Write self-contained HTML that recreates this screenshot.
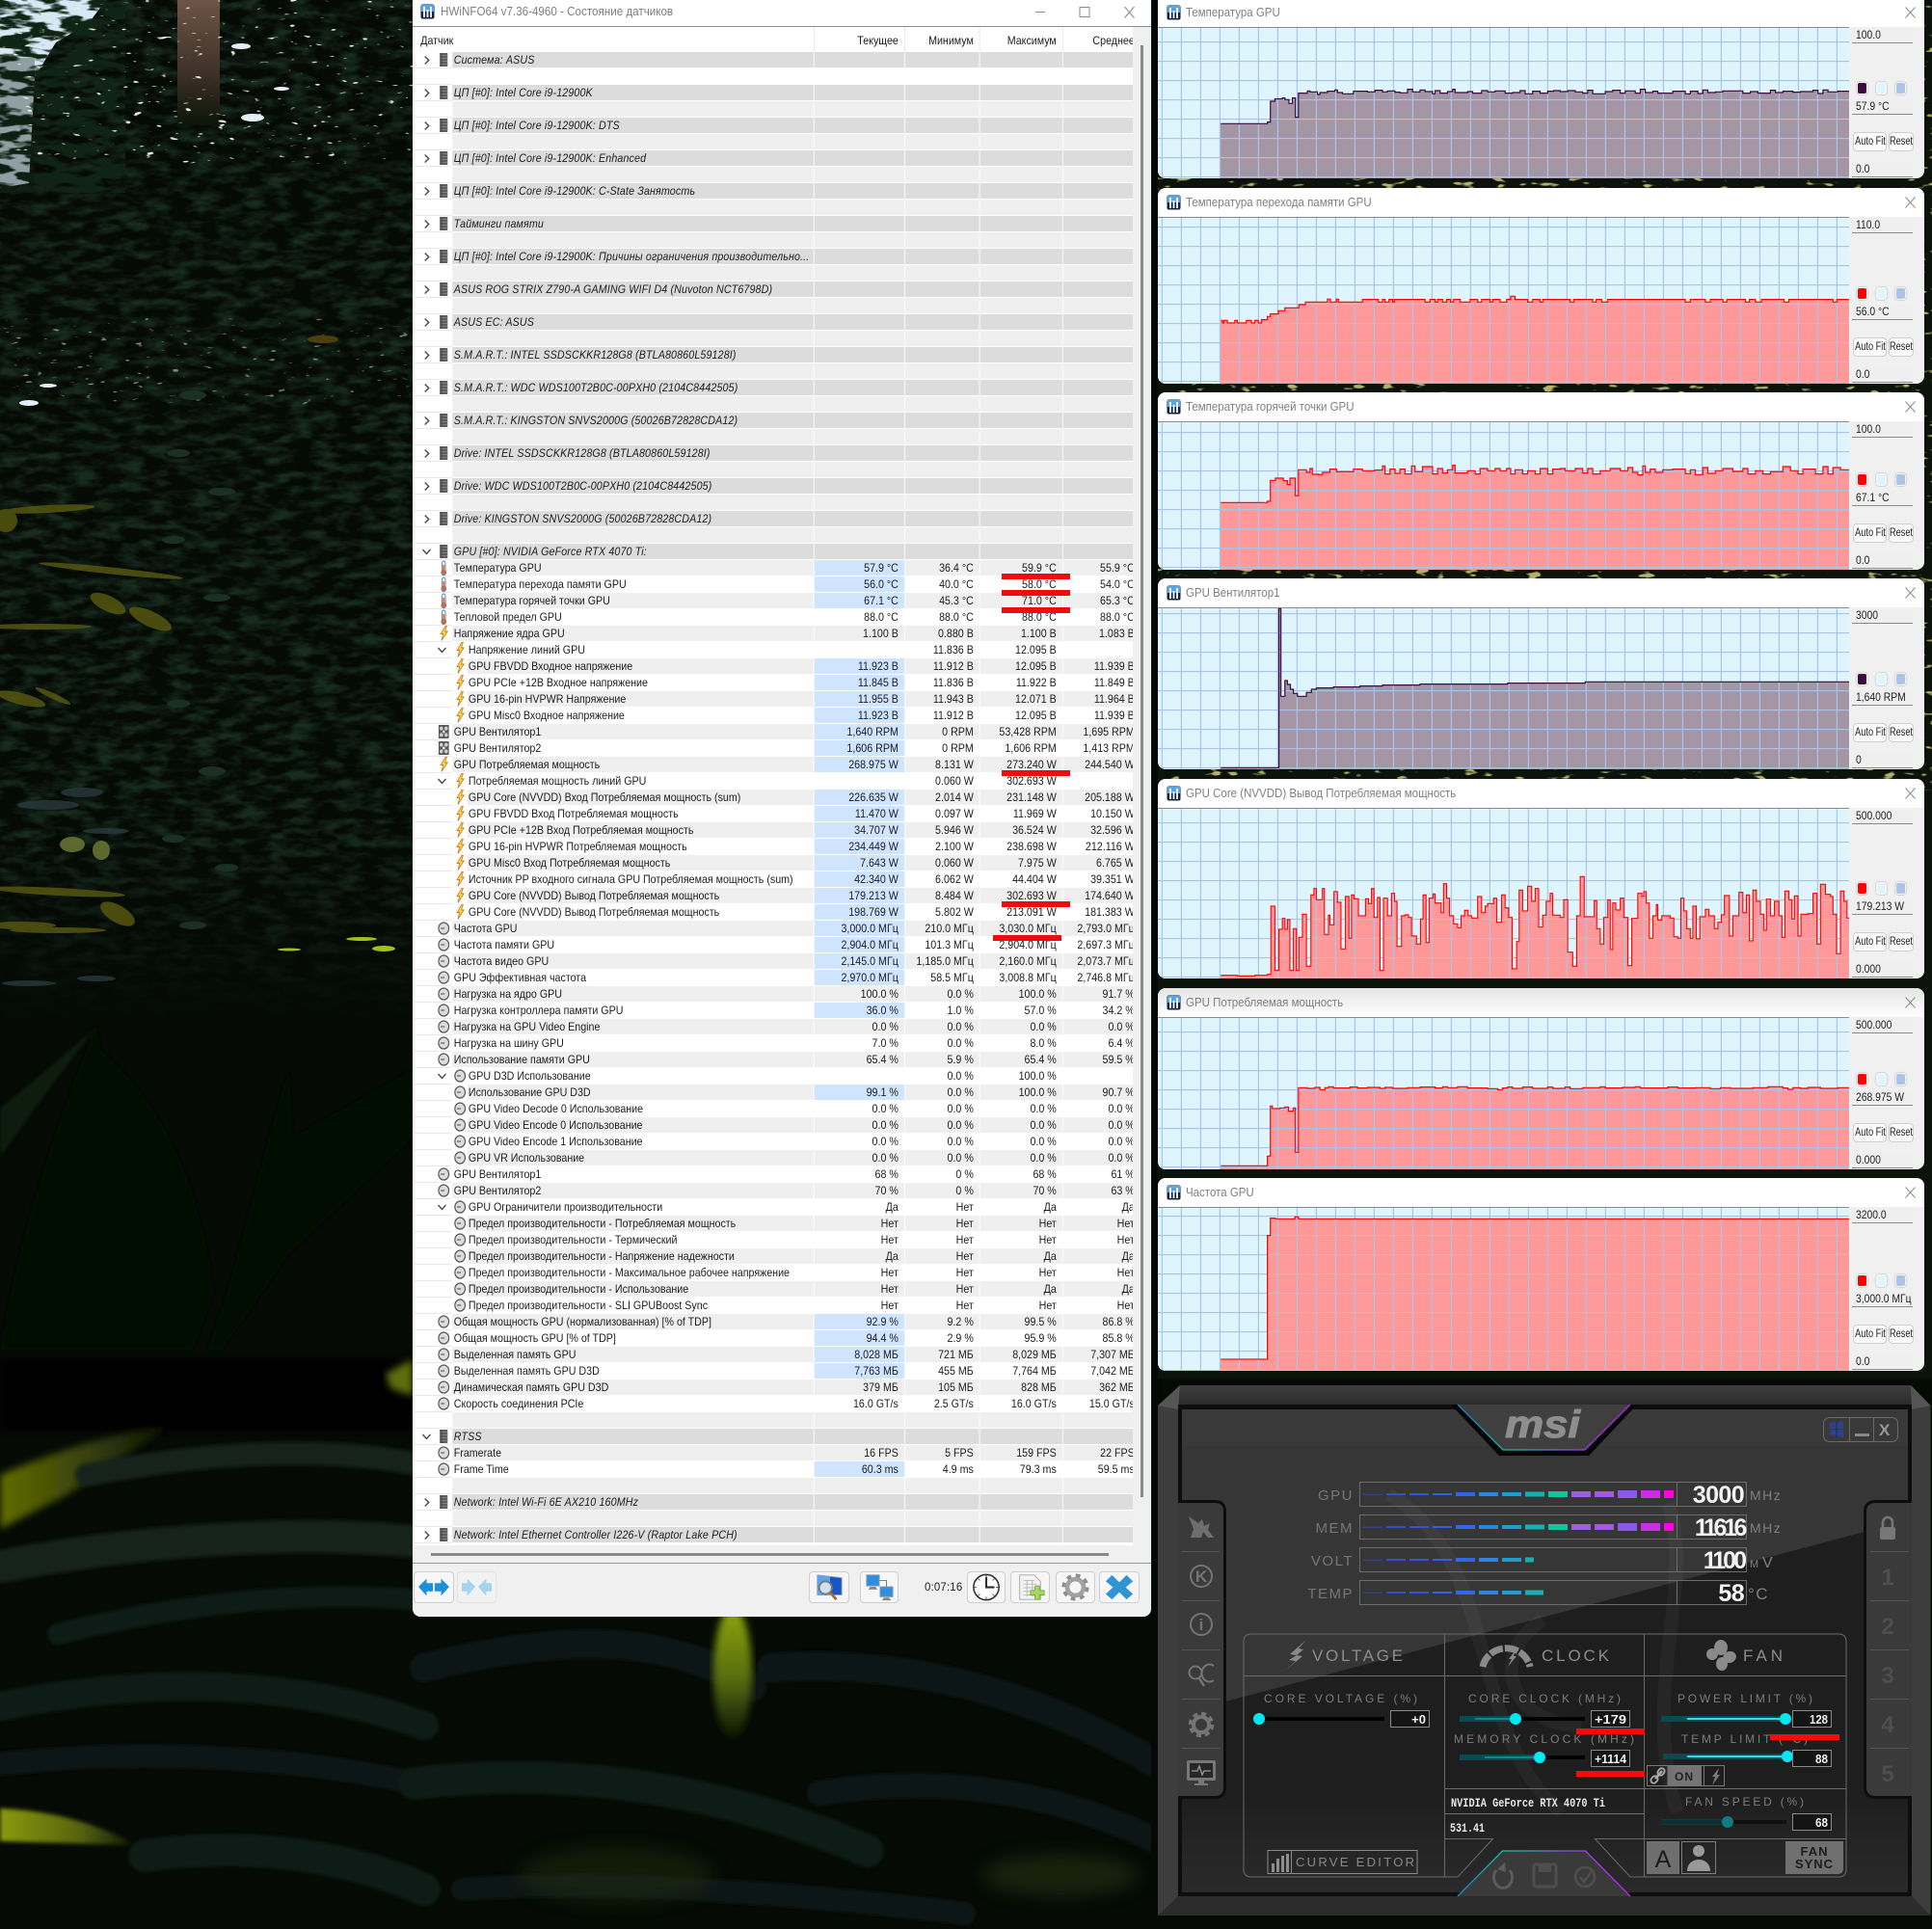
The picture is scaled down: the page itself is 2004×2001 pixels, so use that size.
<!DOCTYPE html>
<html lang="ru"><head><meta charset="utf-8"><title>HWiNFO64 + Afterburner</title>
<style>
html,body{margin:0;padding:0;background:#050a05}
body{position:relative;width:2004px;height:2001px;overflow:hidden;font-family:"Liberation Sans",sans-serif;color:#1c1c1c}
.abs{position:absolute;left:0;top:0}
#main{position:absolute;left:428px;top:-1px;width:766px;height:1678px;background:#f0f0f0;border-radius:0 0 8px 8px;overflow:hidden;box-shadow:0 0 1px #555}
#mt{position:absolute;left:0;top:0;width:766px;height:28px;background:#fff;border-bottom:1px solid #8c8c8c;font-size:12.5px;color:#7f7f7f}
#mt span{position:absolute;left:29px;top:6px;white-space:nowrap;transform:scaleX(.93);transform-origin:0 0}
#tw{position:absolute;left:2px;top:29px;width:745px;height:1575px;background:#fff;overflow:hidden}
table{transform:scaleX(.89);transform-origin:0 0;border-collapse:separate;border-spacing:0;table-layout:fixed;width:847.1px;font-size:12px;line-height:15px}
td{height:17px;padding:1px 7px 0 0;box-sizing:border-box;border-right:1px solid #fff;border-bottom:1px solid #fff;white-space:nowrap;overflow:hidden;text-align:right;position:relative}
thead td{height:26px;border-bottom:0;border-right:1px solid #e6e6e6;padding-top:3px}
thead td:first-child{text-align:left;padding-left:7px}
tbody td:nth-child(2){text-align:left;padding-left:2px}
td.i{background:#fff!important;border-bottom:1px solid #e8e8e8;padding:0}
tbody tr:nth-child(even) td{background:#efefef}
tr.w td{background:#fff!important}
tr.g td{background:#dcdcdc}
tr.g td:nth-child(2){font-style:italic;letter-spacing:.15px}
td.x{padding-left:19px!important;background-image:linear-gradient(90deg,#fff 18px,transparent 18px)!important}
td.h{background:#cfe4ff!important}
.a{position:absolute;left:26.7px;top:0;width:14px;height:16px}
.e{position:absolute;left:6.5px;top:0;width:14px;height:16px}
.e.s{left:24.5px}
.x .a{left:2px}
.rl{position:absolute;background:#f00c0c}
.tb{position:absolute;top:1630px;height:33px;background:#f6f6f6;border:1px solid #cfcfcf;border-radius:4px;box-sizing:border-box}
.tb svg{position:absolute;left:0;top:0;width:100%;height:100%}
.w0{position:absolute;left:1201px;width:795px;background:#f0f0f0;border-radius:8px;overflow:hidden}
.tt{position:absolute;left:0;top:0;width:795px;background:#fff;font-size:12.5px;color:#808080}
.tt span{position:absolute;left:29px;top:50%;margin-top:-8px;line-height:16px;white-space:nowrap;transform:scaleX(.92);transform-origin:0 0}
.ti{position:absolute;left:9px;top:50%;margin-top:-8px;width:15px;height:16px}
.tx{position:absolute;left:775px;top:50%;margin-top:-6px;width:11px;height:12px}
.p{position:absolute;left:0;background:#dff5fd;width:717px;display:block}
.bx{position:absolute;left:720px;width:63px;height:15px;background:#efefef;border-bottom:1px solid #8a8a8a;font-size:11.5px;line-height:17px;color:#222;white-space:nowrap;box-sizing:content-box}
.bx span{display:inline-block;margin-left:4px;transform:scaleX(.9);transform-origin:0 50%}
.sw{position:absolute;bottom:87px;width:9px;height:11px;border:1px solid #fff;border-radius:3px;box-shadow:0 0 1.500px #777;margin-left:-1px}
.bt{position:absolute;bottom:28px;height:20px;background:#fbfbfb;border:1px solid #cfcfcf;border-radius:4px;box-sizing:border-box;font-size:11.5px;line-height:18px;color:#222;white-space:nowrap;overflow:hidden}
.bt span{position:absolute;left:50%;top:0;transform:translateX(-50%) scaleX(.8)}
</style></head><body>

<svg width="0" height="0" style="position:absolute"><defs>
<g id="t"><rect x="5" y="1" width="4" height="11" rx="2" fill="#e8f0f8" stroke="#5a7fb8"/><circle cx="7" cy="12.8" r="2.7" fill="#e8661a" stroke="#5a7fb8"/><rect x="6" y="5" width="2" height="7" fill="#e8661a"/></g>
<g id="b"><path d="M9 .5L3.5 8.5h3L4.5 15.5l7-9.500H8.500l2-5.500z" fill="#ffd65c" stroke="#c97a14" stroke-width=".9"/></g>
<g id="c"><rect x="2.500" y="1" width="9" height="14" fill="#5c5c5c"/><path d="M2.500 3.500h9M2.500 6.500h9M2.500 9.500h9M2.500 12.500h9" stroke="#8a8a8a" stroke-width=".7"/><rect x="2.500" y="1" width="3" height="14" fill="#444" opacity=".5"/></g>
<g id="k"><circle cx="7" cy="8" r="6" fill="#dcdcdc" stroke="#585858" stroke-width="1.300"/><path d="M3.500 8H8" stroke="#444"/></g>
<g id="f"><rect x="1" y="1" width="12" height="14" fill="#585858"/><circle cx="4.200" cy="4.600" r="2" fill="#ccc"/><circle cx="9.800" cy="4.600" r="2" fill="#ccc"/><circle cx="4.200" cy="11.400" r="2" fill="#ccc"/><circle cx="9.800" cy="11.400" r="2" fill="#ccc"/><circle cx="7" cy="8" r="1.500" fill="#eee"/></g>
<path id="r" d="M5 4.500L9.500 8.500 5 12.500" fill="none" stroke="#444" stroke-width="1.500"/>
<path id="d" d="M2.500 6L7 10.500 11.500 6" fill="none" stroke="#444" stroke-width="1.500"/>
<g id="hw"><rect x=".5" y=".5" width="14" height="15" rx="2" fill="#12233a"/><rect x="1" y="1" width="13" height="7" fill="#5aa6e0"/><path d="M4 3v11M7.500 6v8M11 3v11" stroke="#fff" stroke-width="1.800"/></g>
<path id="xx" d="M.5 .5L10.500 11.500M10.500 .5L.5 11.500" stroke="#8c8c8c" stroke-width="1" fill="none"/>
<pattern id="g" width="20" height="20" patternUnits="userSpaceOnUse"><path d="M4.400 0V20M0 .5H20" stroke="#a9c4e8" stroke-width="1.200" fill="none"/></pattern>
<clipPath id="cl"><rect x="147" y="-100" width="3000" height="4000"/></clipPath>
<path id="p1" vector-effect="non-scaling-stroke" d="M145 385H240V380H246V315H255V308H270V305H275V310H283V322H290V305H296V365H302V290H320V283H325V286H340V294H345V288H360V284H375V280H380V288H390V292H412V284H440V286H455V281H470V286H480V283H495V287H505V289H520V278H530V286H545V280H555V285H570V292H575V282H585V290H600V285H610V278H615V288H640V285H650V290H668V282H680V286H695V283H715V290H730V288H745V282H755V292H770V284H785V290H800V284H812V282H825V285H840V282H855V286H870V290H880V281H890V292H915V285H930V281H945V290H955V283H975V290H985V278H995V288H1010V284H1020V290H1050V284H1075V292H1085V284H1100V291H1110V280H1120V288H1135V286H1150V283H1190V290H1205V285H1220V290H1245V281H1255V288H1270V284H1290V287H1305V285H1330V281H1340V291H1350V280H1360V286H1380V284H1420V2500H145Z"/>
<path id="p2" vector-effect="non-scaling-stroke" d="M145 997H150V1005H153V997H160V1005H175V997H180V1005H198V997H208V1005H215V997H222V1005H228V995H240V985H246V977H262V967H275V958H303V948H316V940H360V931H366V940H378V931H382V940H430V932H462V940H470V932H475V940H483V932H490V940H494V932H555V940H565V932H575V940H580V932H590V940H598V932H606V940H612V932H625V940H645V932H660V940H668V932H685V940H690V932H705V940H718V932H726V922H735V932H760V940H770V932H785V940H790V932H845V940H852V932H890V940H897V932H908V940H920V932H1075V940H1085V932H1115V940H1125V932H1150V940H1158V932H1195V940H1203V932H1215V940H1227V932H1272V940H1282V932H1370V940H1378V932H1420V2500H145Z"/>
<path id="p3" vector-effect="non-scaling-stroke" d="M145 334H240V330H246V265H256V258H272V266H280V278H285V258H296V313H302V232H318V240H325V228H330V246H342V247H350V240H365V230H378V238H412V230H430V235H455V233H470V220H475V245H485V230H495V243H505V230H515V245H528V220H535V238H550V222H570V245H580V228H590V242H600V232H610V218H615V242H640V235H655V245H665V228H680V235H695V228H705V235H718V228H726V245H735V232H750V245H760V235H775V245H785V228H800V245H810V230H825V228H835V235H855V228H870V242H880V228H890V245H905V235H925V228H945V235H960V225H970V240H980V248H990V220H995V240H1005V230H1015V240H1030V232H1050V230H1075V244H1085V232H1095V247H1110V225H1120V243H1135V235H1150V228H1170V237H1190V228H1200V245H1215V235H1230V245H1245V238H1270V222H1285V235H1300V245H1310V230H1335V245H1350V222H1360V245H1370V225H1385V232H1420V2500H145Z"/>
<path id="p4" vector-effect="non-scaling-stroke" d="M145 1159H263V664H267V937H275V888H280V900H286V915H292V928H300V937H318V925H328V915H338V911H372V908H425V905H470V902H545V899H720V896H875V892H1420V2500H145Z"/>
<path id="p5" vector-effect="non-scaling-stroke" d="M145 635H180V637H215V635H240V632H247V420H255V620H263V492H270V458H275V492H280V462H285V620H292V490H298V620H303V517H310V445H318V607H327V385H333V365H338V400H350V365H354V508H362V448H365V478H373V375H380V408H387V553H396V390H403V520H408V385H413V397H422V450H436V397H442V412H448V365H453V455H460V393H465V620H472V395H480V450H488V380H494V405H499V545H508V450H515V447H522V455H528V513H538V538H546V460H551V385H557V533H563V395H571V382H575V410H587V440H592V350H598V395H604V450H612V475H620V487H627V450H634V433H641V450H648V457H660V390H668V440H675V420H680V412H692V395H698V470H708V385H715V425H722V455H729V615H738V530H743V370H750V435H760V358H768V405H775V365H782V485H790V448H797V405H805V380H810V448H825V455H832V400H840V563H850V607H858V450H865V328H873V453H893V403H898V490H905V538H912V455H920V400H925V555H930V410H936V432H945V395H952V455H960V605H968V458H980V380H988V390H992V375H997V410H1003V520H1010V450H1017V415H1020V463H1028V450H1045V457H1052V515H1060V520H1066V395H1072V435H1078V490H1085V520H1090V420H1097V522H1104V453H1115V430H1122V450H1133V490H1140V470H1147V447H1153V387H1163V513H1170V450H1182V377H1190V440H1197V385H1203V528H1210V370H1217V405H1225V445H1232V495H1237V398H1245V450H1253V405H1262V450H1268V517H1274V373H1282V400H1288V460H1293V388H1300V513H1306V445H1320V443H1330V380H1338V538H1345V352H1355V383H1365V390H1370V445H1377V568H1385V373H1392V405H1398V457H1420V2500H145Z"/>
<path id="p6" vector-effect="non-scaling-stroke" d="M145 568H240V538H246V382H250V390H265V388H275V385H282V398H292V388H296V526H302V325H320V327H335V324H345V331H355V325H362V322H372V326H405V323H420V326H440V324H465V327H475V324H490V327H520V325H545V323H575V326H590V322H600V325H620V322H640V326H680V328H700V331H710V326H720V323H730V327H750V323H770V327H800V323H810V327H835V323H845V328H870V325H905V322H915V326H950V324H975V322H985V326H1040V323H1060V326H1095V325H1125V328H1145V325H1165V327H1210V325H1240V322H1270V326H1280V330H1290V325H1305V327H1320V324H1345V327H1380V325H1420V2500H145Z"/>
<path id="p7" vector-effect="non-scaling-stroke" d="M145 1170H240V785H246V731H256V733H295V727H302V733H1420V2500H145Z"/>
<linearGradient id="tr" x1="0" y1="0" x2="0" y2="1"><stop offset="0" stop-color="#6d5446"/><stop offset=".55" stop-color="#41332a"/><stop offset="1" stop-color="#0d1408"/></linearGradient>
<linearGradient id="gl" x1="0" y1="0" x2="1" y2="0"><stop offset="0" stop-color="#5f6c00"/><stop offset=".5" stop-color="#39420a"/><stop offset="1" stop-color="#0a1203"/></linearGradient>
<linearGradient id="gb" x1="0" y1="0" x2="1" y2="0"><stop offset="0" stop-color="#8a9a08"/><stop offset=".6" stop-color="#55620a"/><stop offset="1" stop-color="#0c1404"/></linearGradient>
<linearGradient id="gy" x1="0" y1="0" x2="0" y2="1"><stop offset="0" stop-color="#8fa410"/><stop offset=".55" stop-color="#566c0a"/><stop offset="1" stop-color="#0a1405"/></linearGradient>
<linearGradient id="pu" x1="0" y1="0" x2="0" y2="1"><stop offset="0" stop-color="#3e3e3e"/><stop offset="1" stop-color="#2c2c2c"/></linearGradient>
<linearGradient id="pb" x1="0" y1="0" x2="0" y2="1"><stop offset="0" stop-color="#1e1e1e"/><stop offset=".8" stop-color="#1e1e1e"/><stop offset="1" stop-color="#2a2a2a"/></linearGradient>
<linearGradient id="ng" x1="0" y1="0" x2="1" y2="0"><stop offset="0" stop-color="#1f7fd8"/><stop offset=".3" stop-color="#10c8a8"/><stop offset=".65" stop-color="#8f4ce8"/><stop offset="1" stop-color="#c020e8"/></linearGradient>
<linearGradient id="fd" x1="0" y1="0" x2="0" y2="1"><stop offset="0" stop-color="#050a05" stop-opacity="0"/><stop offset="1" stop-color="#050a05"/></linearGradient>
<filter id="bl2"><feGaussianBlur stdDeviation="2"/></filter>
<filter id="bl4"><feGaussianBlur stdDeviation="4"/></filter>
<filter id="bl9" x="-30%" y="-30%" width="160%" height="160%"><feGaussianBlur stdDeviation="9"/></filter>
<filter id="tx" x="0" y="0" width="100%" height="100%" color-interpolation-filters="sRGB"><feTurbulence type="fractalNoise" baseFrequency=".04 .1" numOctaves="3" seed="5"/><feColorMatrix values="0 0 0 0 .09 0 0 0 0 .17 0 0 0 0 .12 2.800 0 0 0 -1.150"/></filter>
<filter id="sp" x="0" y="0" width="100%" height="100%" color-interpolation-filters="sRGB"><feTurbulence type="fractalNoise" baseFrequency=".08 .24" numOctaves="2" seed="9"/><feColorMatrix values="0 0 0 0 .92 0 0 0 0 .95 0 0 0 0 .9 12 0 0 0 -8.600"/></filter>
<filter id="sq" x="0" y="0" width="100%" height="100%" color-interpolation-filters="sRGB"><feTurbulence type="fractalNoise" baseFrequency=".06 .18" numOctaves="2" seed="14"/><feColorMatrix values="0 0 0 0 .7 0 0 0 0 .7 0 0 0 0 .42 9 0 0 0 -5.700"/></filter>
<filter id="dk" x="0" y="0" width="100%" height="100%" color-interpolation-filters="sRGB"><feTurbulence type="fractalNoise" baseFrequency=".03 .1" numOctaves="3" seed="21"/><feColorMatrix values="0 0 0 0 .06 0 0 0 0 .14 0 0 0 0 .08 9 0 0 0 -3.900"/></filter>
</defs></svg>

<!-- wallpaper -->
<svg class="abs" width="2004" height="2001">
<rect width="2004" height="2001" fill="#050a05"/>
<rect width="1200" height="1060" filter="url(#tx)"/>
<rect y="860" width="1200" height="200" fill="url(#fd)"/>
<path d="M0 0H110L92 24 58 44 36 80 30 190 0 195Z" fill="#d7e8f4"/>
<rect width="130" height="200" filter="url(#dk)"/>
<rect x="0" y="60" width="36" height="140" fill="#0b160c" opacity=".35"/>
<rect x="184" y="0" width="44" height="130" fill="url(#tr)"/>
<rect width="428" height="170" filter="url(#sp)"/>
<rect x="0" y="330" width="428" height="90" filter="url(#sp)" opacity=".5"/>
<g fill="#e4eef6"><ellipse cx="250" cy="48" rx="10" ry="3"/><ellipse cx="262" cy="122" rx="12" ry="4"/><ellipse cx="292" cy="92" rx="8" ry="2"/><ellipse cx="30" cy="418" rx="10" ry="3"/><ellipse cx="50" cy="400" rx="9" ry="2"/></g>
<g fill="#5a5a10" opacity=".8"><ellipse cx="6" cy="540" rx="12" ry="12"/><ellipse cx="50" cy="528" rx="48" ry="4" transform="rotate(-3 50 528)"/><ellipse cx="115" cy="592" rx="75" ry="3.500" transform="rotate(6 115 592)"/><ellipse cx="112" cy="626" rx="8" ry="20" transform="rotate(-65 112 626)"/><ellipse cx="156" cy="642" rx="8" ry="24" transform="rotate(-65 156 642)"/><ellipse cx="40" cy="650" rx="55" ry="3"/><ellipse cx="22" cy="725" rx="26" ry="6" transform="rotate(14 22 725)"/><ellipse cx="55" cy="722" rx="20" ry="3" transform="rotate(25 55 722)"/><ellipse cx="22" cy="960" rx="36" ry="4"/><ellipse cx="60" cy="925" rx="70" ry="4" transform="rotate(3 60 925)"/><ellipse cx="122" cy="948" rx="9" ry="20" transform="rotate(-60 122 948)"/><ellipse cx="60" cy="965" rx="50" ry="3"/></g>
<g fill="#6b7834" opacity=".85"><ellipse cx="75" cy="876" rx="13" ry="8"/><ellipse cx="105" cy="882" rx="9" ry="10"/></g>
<g fill="#293a3e" opacity=".8"><ellipse cx="50" cy="835" rx="32" ry="5"/><ellipse cx="85" cy="822" rx="22" ry="5"/><ellipse cx="110" cy="862" rx="24" ry="3"/><ellipse cx="30" cy="1020" rx="28" ry="3"/><ellipse cx="100" cy="1015" rx="20" ry="3"/></g>
<g fill="#1a3024"><ellipse cx="200" cy="410" rx="14" ry="5"/><ellipse cx="185" cy="470" rx="12" ry="4"/><ellipse cx="230" cy="510" rx="14" ry="4"/><ellipse cx="180" cy="560" rx="12" ry="4"/><ellipse cx="225" cy="620" rx="14" ry="4"/><ellipse cx="185" cy="730" rx="12" ry="4"/><ellipse cx="220" cy="800" rx="14" ry="5"/><ellipse cx="180" cy="870" rx="12" ry="4"/><ellipse cx="235" cy="900" rx="12" ry="4"/><ellipse cx="200" cy="960" rx="14" ry="4"/></g>
<g fill="#a2c01c"><ellipse cx="375" cy="974" rx="16" ry="2"/><ellipse cx="398" cy="984" rx="12" ry="3"/><ellipse cx="300" cy="985" rx="12" ry="1.500"/></g>
<ellipse cx="335" cy="352" rx="16" ry="4" fill="#4f3e0e"/>
<!-- big dark leaves -->
<g filter="url(#bl2)"><path d="M0 1400C20 1280 60 1160 100 1065L105 1090C150 1130 200 1190 222 1340L200 1400Z" fill="#020a02"/>
<path d="M100 1065L58 1120 0 1200V1150L60 1100Z" fill="#0c1c08"/>
<path d="M215 1400C250 1310 270 1200 300 1110L303 1180 428 1110V1180L300 1300 230 1400Z" fill="#031003"/></g>
<rect y="1410" width="1200" height="75" fill="#010401" filter="url(#bl4)"/>
<path d="M0 1530C60 1505 120 1485 175 1480L70 1550 0 1586Z" fill="url(#gl)" filter="url(#bl4)"/>
<path d="M400 1425L428 1410V1448L405 1440Z" fill="#5f6e08" filter="url(#bl4)"/>
<!-- lower foliage -->
<g fill="none" stroke-linecap="round" filter="url(#bl2)">
<path d="M90 1530C220 1505 340 1500 440 1520" stroke="#16241a" stroke-width="24"/>
<path d="M0 1625C130 1600 300 1585 440 1600" stroke="#14211b" stroke-width="34"/>
<path d="M60 1695C200 1660 330 1650 440 1660" stroke="#101c16" stroke-width="22"/>
<path d="M0 1770C150 1740 300 1740 440 1790" stroke="#111e19" stroke-width="30"/>
<path d="M0 1830C130 1815 300 1820 430 1850" stroke="#0d1814" stroke-width="24"/>
<path d="M150 1925C260 1910 360 1925 440 1960" stroke="#0e1a15" stroke-width="34"/>
<path d="M440 1730C600 1690 700 1700 780 1750" stroke="#0e1914" stroke-width="30"/>
<path d="M430 1850C600 1830 760 1860 900 1920" stroke="#0f1b15" stroke-width="34"/>
<path d="M800 1730C950 1720 1080 1760 1200 1830" stroke="#0c1712" stroke-width="30"/>
<path d="M850 1860C980 1840 1100 1860 1200 1910" stroke="#0e1912" stroke-width="26"/>
<path d="M480 1960C600 1950 800 1960 1000 1985" stroke="#0d1912" stroke-width="24"/>
</g>
<path d="M0 1876C50 1878 100 1890 140 1914L0 1910Z" fill="url(#gb)" filter="url(#bl2)"/>
<ellipse cx="760" cy="1735" rx="20" ry="68" fill="url(#gy)" filter="url(#bl4)"/>
<ellipse cx="640" cy="1945" rx="100" ry="30" fill="#243010" opacity=".45" filter="url(#bl9)"/>
<ellipse cx="1100" cy="1945" rx="80" ry="22" fill="#2b3a12" opacity=".5" filter="url(#bl9)"/>
<rect x="1201" y="0" width="803" height="1430" fill="#0b130b"/>
<rect x="1201" y="0" width="803" height="820" filter="url(#sq)"/>
<rect x="1194" y="0" width="7" height="2001" fill="#050905"/>
</svg>

<!-- HWiNFO main window -->
<div id="main">
<div id="mt"><svg style="position:absolute;left:8px;top:5px;width:15px;height:16px"><use href="#hw"/></svg><span>HWiNFO64 v7.36-4960 - Состояние датчиков</span>
<svg style="position:absolute;left:646px;top:7px;width:120px;height:14px"><path d="M0 6.500H10M46 1.500H56V11.500H46ZM92.500 1L102.500 12.500M102.500 1L92.500 12.500" fill="none" stroke="#8c8c8c"/></svg></div>
<div id="tw"><table><colgroup><col style="width:43.8px"><col style="width:422.500px"><col style="width:105.600px"><col style="width:87.600px"><col style="width:96.600px"><col style="width:91px"></colgroup>
<thead><tr><td colspan="2">Датчик</td><td>Текущее</td><td>Минимум</td><td>Максимум</td><td>Среднее</td></tr></thead>
<tbody>
<tr class="g"><td class="i"><svg class="e"><use href="#r"/></svg><svg class="a"><use href="#c"/></svg></td><td>Система: ASUS</td><td></td><td></td><td></td><td></td></tr>
<tr class="w"><td class="i"></td><td></td><td></td><td></td><td></td><td></td></tr>
<tr class="g"><td class="i"><svg class="e"><use href="#r"/></svg><svg class="a"><use href="#c"/></svg></td><td>ЦП [#0]: Intel Core i9-12900K</td><td></td><td></td><td></td><td></td></tr>
<tr><td class="i"></td><td></td><td></td><td></td><td></td><td></td></tr>
<tr class="g"><td class="i"><svg class="e"><use href="#r"/></svg><svg class="a"><use href="#c"/></svg></td><td>ЦП [#0]: Intel Core i9-12900K: DTS</td><td></td><td></td><td></td><td></td></tr>
<tr><td class="i"></td><td></td><td></td><td></td><td></td><td></td></tr>
<tr class="g"><td class="i"><svg class="e"><use href="#r"/></svg><svg class="a"><use href="#c"/></svg></td><td>ЦП [#0]: Intel Core i9-12900K: Enhanced</td><td></td><td></td><td></td><td></td></tr>
<tr><td class="i"></td><td></td><td></td><td></td><td></td><td></td></tr>
<tr class="g"><td class="i"><svg class="e"><use href="#r"/></svg><svg class="a"><use href="#c"/></svg></td><td>ЦП [#0]: Intel Core i9-12900K: C-State Занятость</td><td></td><td></td><td></td><td></td></tr>
<tr><td class="i"></td><td></td><td></td><td></td><td></td><td></td></tr>
<tr class="g"><td class="i"><svg class="e"><use href="#r"/></svg><svg class="a"><use href="#c"/></svg></td><td>Тайминги памяти</td><td></td><td></td><td></td><td></td></tr>
<tr><td class="i"></td><td></td><td></td><td></td><td></td><td></td></tr>
<tr class="g"><td class="i"><svg class="e"><use href="#r"/></svg><svg class="a"><use href="#c"/></svg></td><td>ЦП [#0]: Intel Core i9-12900K: Причины ограничения производительно...</td><td></td><td></td><td></td><td></td></tr>
<tr><td class="i"></td><td></td><td></td><td></td><td></td><td></td></tr>
<tr class="g"><td class="i"><svg class="e"><use href="#r"/></svg><svg class="a"><use href="#c"/></svg></td><td>ASUS ROG STRIX Z790-A GAMING WIFI D4 (Nuvoton NCT6798D)</td><td></td><td></td><td></td><td></td></tr>
<tr><td class="i"></td><td></td><td></td><td></td><td></td><td></td></tr>
<tr class="g"><td class="i"><svg class="e"><use href="#r"/></svg><svg class="a"><use href="#c"/></svg></td><td>ASUS EC: ASUS</td><td></td><td></td><td></td><td></td></tr>
<tr><td class="i"></td><td></td><td></td><td></td><td></td><td></td></tr>
<tr class="g"><td class="i"><svg class="e"><use href="#r"/></svg><svg class="a"><use href="#c"/></svg></td><td>S.M.A.R.T.: INTEL SSDSCKKR128G8 (BTLA80860L59128I)</td><td></td><td></td><td></td><td></td></tr>
<tr><td class="i"></td><td></td><td></td><td></td><td></td><td></td></tr>
<tr class="g"><td class="i"><svg class="e"><use href="#r"/></svg><svg class="a"><use href="#c"/></svg></td><td>S.M.A.R.T.: WDC WDS100T2B0C-00PXH0 (2104C8442505)</td><td></td><td></td><td></td><td></td></tr>
<tr><td class="i"></td><td></td><td></td><td></td><td></td><td></td></tr>
<tr class="g"><td class="i"><svg class="e"><use href="#r"/></svg><svg class="a"><use href="#c"/></svg></td><td>S.M.A.R.T.: KINGSTON SNVS2000G (50026B72828CDA12)</td><td></td><td></td><td></td><td></td></tr>
<tr><td class="i"></td><td></td><td></td><td></td><td></td><td></td></tr>
<tr class="g"><td class="i"><svg class="e"><use href="#r"/></svg><svg class="a"><use href="#c"/></svg></td><td>Drive: INTEL SSDSCKKR128G8 (BTLA80860L59128I)</td><td></td><td></td><td></td><td></td></tr>
<tr><td class="i"></td><td></td><td></td><td></td><td></td><td></td></tr>
<tr class="g"><td class="i"><svg class="e"><use href="#r"/></svg><svg class="a"><use href="#c"/></svg></td><td>Drive: WDC WDS100T2B0C-00PXH0 (2104C8442505)</td><td></td><td></td><td></td><td></td></tr>
<tr><td class="i"></td><td></td><td></td><td></td><td></td><td></td></tr>
<tr class="g"><td class="i"><svg class="e"><use href="#r"/></svg><svg class="a"><use href="#c"/></svg></td><td>Drive: KINGSTON SNVS2000G (50026B72828CDA12)</td><td></td><td></td><td></td><td></td></tr>
<tr><td class="i"></td><td></td><td></td><td></td><td></td><td></td></tr>
<tr class="g"><td class="i"><svg class="e"><use href="#d"/></svg><svg class="a"><use href="#c"/></svg></td><td>GPU [#0]: NVIDIA GeForce RTX 4070 Ti:</td><td></td><td></td><td></td><td></td></tr>
<tr><td class="i"><svg class="a"><use href="#t"/></svg></td><td>Температура GPU</td><td class="h">57.9 °C</td><td>36.4 °C</td><td>59.9 °C</td><td>55.9 °C</td></tr>
<tr><td class="i"><svg class="a"><use href="#t"/></svg></td><td>Температура перехода памяти GPU</td><td class="h">56.0 °C</td><td>40.0 °C</td><td>58.0 °C</td><td>54.0 °C</td></tr>
<tr><td class="i"><svg class="a"><use href="#t"/></svg></td><td>Температура горячей точки GPU</td><td class="h">67.1 °C</td><td>45.3 °C</td><td>71.0 °C</td><td>65.3 °C</td></tr>
<tr><td class="i"><svg class="a"><use href="#t"/></svg></td><td>Тепловой предел GPU</td><td>88.0 °C</td><td>88.0 °C</td><td>88.0 °C</td><td>88.0 °C</td></tr>
<tr><td class="i"><svg class="a"><use href="#b"/></svg></td><td>Напряжение ядра GPU</td><td>1.100 В</td><td>0.880 В</td><td>1.100 В</td><td>1.083 В</td></tr>
<tr><td class="i"><svg class="e s"><use href="#d"/></svg></td><td class="x"><svg class="a"><use href="#b"/></svg>Напряжение линий GPU</td><td></td><td>11.836 В</td><td>12.095 В</td><td></td></tr>
<tr><td class="i"></td><td class="x"><svg class="a"><use href="#b"/></svg>GPU FBVDD Входное напряжение</td><td class="h">11.923 В</td><td>11.912 В</td><td>12.095 В</td><td>11.939 В</td></tr>
<tr><td class="i"></td><td class="x"><svg class="a"><use href="#b"/></svg>GPU PCIe +12В Входное напряжение</td><td class="h">11.845 В</td><td>11.836 В</td><td>11.922 В</td><td>11.849 В</td></tr>
<tr><td class="i"></td><td class="x"><svg class="a"><use href="#b"/></svg>GPU 16-pin HVPWR Напряжение</td><td class="h">11.955 В</td><td>11.943 В</td><td>12.071 В</td><td>11.964 В</td></tr>
<tr><td class="i"></td><td class="x"><svg class="a"><use href="#b"/></svg>GPU Misc0 Входное напряжение</td><td class="h">11.923 В</td><td>11.912 В</td><td>12.095 В</td><td>11.939 В</td></tr>
<tr><td class="i"><svg class="a"><use href="#f"/></svg></td><td>GPU Вентилятор1</td><td class="h">1,640 RPM</td><td>0 RPM</td><td>53,428 RPM</td><td>1,695 RPM</td></tr>
<tr><td class="i"><svg class="a"><use href="#f"/></svg></td><td>GPU Вентилятор2</td><td class="h">1,606 RPM</td><td>0 RPM</td><td>1,606 RPM</td><td>1,413 RPM</td></tr>
<tr><td class="i"><svg class="a"><use href="#b"/></svg></td><td>GPU Потребляемая мощность</td><td class="h">268.975 W</td><td>8.131 W</td><td>273.240 W</td><td>244.540 W</td></tr>
<tr><td class="i"><svg class="e s"><use href="#d"/></svg></td><td class="x"><svg class="a"><use href="#b"/></svg>Потребляемая мощность линий GPU</td><td></td><td>0.060 W</td><td>302.693 W</td><td></td></tr>
<tr><td class="i"></td><td class="x"><svg class="a"><use href="#b"/></svg>GPU Core (NVVDD) Вход Потребляемая мощность (sum)</td><td class="h">226.635 W</td><td>2.014 W</td><td>231.148 W</td><td>205.188 W</td></tr>
<tr><td class="i"></td><td class="x"><svg class="a"><use href="#b"/></svg>GPU FBVDD Вход Потребляемая мощность</td><td class="h">11.470 W</td><td>0.097 W</td><td>11.969 W</td><td>10.150 W</td></tr>
<tr><td class="i"></td><td class="x"><svg class="a"><use href="#b"/></svg>GPU PCIe +12В Вход Потребляемая мощность</td><td class="h">34.707 W</td><td>5.946 W</td><td>36.524 W</td><td>32.596 W</td></tr>
<tr><td class="i"></td><td class="x"><svg class="a"><use href="#b"/></svg>GPU 16-pin HVPWR Потребляемая мощность</td><td class="h">234.449 W</td><td>2.100 W</td><td>238.698 W</td><td>212.116 W</td></tr>
<tr><td class="i"></td><td class="x"><svg class="a"><use href="#b"/></svg>GPU Misc0 Вход Потребляемая мощность</td><td class="h">7.643 W</td><td>0.060 W</td><td>7.975 W</td><td>6.765 W</td></tr>
<tr><td class="i"></td><td class="x"><svg class="a"><use href="#b"/></svg>Источник PP входного сигнала GPU Потребляемая мощность (sum)</td><td class="h">42.340 W</td><td>6.062 W</td><td>44.404 W</td><td>39.351 W</td></tr>
<tr><td class="i"></td><td class="x"><svg class="a"><use href="#b"/></svg>GPU Core (NVVDD) Вывод Потребляемая мощность</td><td class="h">179.213 W</td><td>8.484 W</td><td>302.693 W</td><td>174.640 W</td></tr>
<tr><td class="i"></td><td class="x"><svg class="a"><use href="#b"/></svg>GPU Core (NVVDD) Вывод Потребляемая мощность</td><td class="h">198.769 W</td><td>5.802 W</td><td>213.091 W</td><td>181.383 W</td></tr>
<tr><td class="i"><svg class="a"><use href="#k"/></svg></td><td>Частота GPU</td><td class="h">3,000.0 МГц</td><td>210.0 МГц</td><td>3,030.0 МГц</td><td>2,793.0 МГц</td></tr>
<tr><td class="i"><svg class="a"><use href="#k"/></svg></td><td>Частота памяти GPU</td><td class="h">2,904.0 МГц</td><td>101.3 МГц</td><td>2,904.0 МГц</td><td>2,697.3 МГц</td></tr>
<tr><td class="i"><svg class="a"><use href="#k"/></svg></td><td>Частота видео GPU</td><td class="h">2,145.0 МГц</td><td>1,185.0 МГц</td><td>2,160.0 МГц</td><td>2,073.7 МГц</td></tr>
<tr><td class="i"><svg class="a"><use href="#k"/></svg></td><td>GPU Эффективная частота</td><td class="h">2,970.0 МГц</td><td>58.5 МГц</td><td>3,008.8 МГц</td><td>2,746.8 МГц</td></tr>
<tr><td class="i"><svg class="a"><use href="#k"/></svg></td><td>Нагрузка на ядро GPU</td><td>100.0 %</td><td>0.0 %</td><td>100.0 %</td><td>91.7 %</td></tr>
<tr><td class="i"><svg class="a"><use href="#k"/></svg></td><td>Нагрузка контроллера памяти GPU</td><td class="h">36.0 %</td><td>1.0 %</td><td>57.0 %</td><td>34.2 %</td></tr>
<tr><td class="i"><svg class="a"><use href="#k"/></svg></td><td>Нагрузка на GPU Video Engine</td><td>0.0 %</td><td>0.0 %</td><td>0.0 %</td><td>0.0 %</td></tr>
<tr><td class="i"><svg class="a"><use href="#k"/></svg></td><td>Нагрузка на шину GPU</td><td>7.0 %</td><td>0.0 %</td><td>8.0 %</td><td>6.4 %</td></tr>
<tr><td class="i"><svg class="a"><use href="#k"/></svg></td><td>Использование памяти GPU</td><td>65.4 %</td><td>5.9 %</td><td>65.4 %</td><td>59.5 %</td></tr>
<tr><td class="i"><svg class="e s"><use href="#d"/></svg></td><td class="x"><svg class="a"><use href="#k"/></svg>GPU D3D Использование</td><td></td><td>0.0 %</td><td>100.0 %</td><td></td></tr>
<tr><td class="i"></td><td class="x"><svg class="a"><use href="#k"/></svg>Использование GPU D3D</td><td class="h">99.1 %</td><td>0.0 %</td><td>100.0 %</td><td>90.7 %</td></tr>
<tr><td class="i"></td><td class="x"><svg class="a"><use href="#k"/></svg>GPU Video Decode 0 Использование</td><td>0.0 %</td><td>0.0 %</td><td>0.0 %</td><td>0.0 %</td></tr>
<tr><td class="i"></td><td class="x"><svg class="a"><use href="#k"/></svg>GPU Video Encode 0 Использование</td><td>0.0 %</td><td>0.0 %</td><td>0.0 %</td><td>0.0 %</td></tr>
<tr><td class="i"></td><td class="x"><svg class="a"><use href="#k"/></svg>GPU Video Encode 1 Использование</td><td>0.0 %</td><td>0.0 %</td><td>0.0 %</td><td>0.0 %</td></tr>
<tr><td class="i"></td><td class="x"><svg class="a"><use href="#k"/></svg>GPU VR Использование</td><td>0.0 %</td><td>0.0 %</td><td>0.0 %</td><td>0.0 %</td></tr>
<tr><td class="i"><svg class="a"><use href="#k"/></svg></td><td>GPU Вентилятор1</td><td>68 %</td><td>0 %</td><td>68 %</td><td>61 %</td></tr>
<tr><td class="i"><svg class="a"><use href="#k"/></svg></td><td>GPU Вентилятор2</td><td>70 %</td><td>0 %</td><td>70 %</td><td>63 %</td></tr>
<tr><td class="i"><svg class="e s"><use href="#d"/></svg></td><td class="x"><svg class="a"><use href="#k"/></svg>GPU Ограничители производительности</td><td>Да</td><td>Нет</td><td>Да</td><td>Да</td></tr>
<tr><td class="i"></td><td class="x"><svg class="a"><use href="#k"/></svg>Предел производительности - Потребляемая мощность</td><td>Нет</td><td>Нет</td><td>Нет</td><td>Нет</td></tr>
<tr><td class="i"></td><td class="x"><svg class="a"><use href="#k"/></svg>Предел производительности - Термический</td><td>Нет</td><td>Нет</td><td>Нет</td><td>Нет</td></tr>
<tr><td class="i"></td><td class="x"><svg class="a"><use href="#k"/></svg>Предел производительности - Напряжение надежности</td><td>Да</td><td>Нет</td><td>Да</td><td>Да</td></tr>
<tr><td class="i"></td><td class="x"><svg class="a"><use href="#k"/></svg>Предел производительности - Максимальное рабочее напряжение</td><td>Нет</td><td>Нет</td><td>Нет</td><td>Нет</td></tr>
<tr><td class="i"></td><td class="x"><svg class="a"><use href="#k"/></svg>Предел производительности - Использование</td><td>Нет</td><td>Нет</td><td>Да</td><td>Да</td></tr>
<tr><td class="i"></td><td class="x"><svg class="a"><use href="#k"/></svg>Предел производительности - SLI GPUBoost Sync</td><td>Нет</td><td>Нет</td><td>Нет</td><td>Нет</td></tr>
<tr><td class="i"><svg class="a"><use href="#k"/></svg></td><td>Общая мощность GPU (нормализованная) [% of TDP]</td><td class="h">92.9 %</td><td>9.2 %</td><td>99.5 %</td><td>86.8 %</td></tr>
<tr><td class="i"><svg class="a"><use href="#k"/></svg></td><td>Общая мощность GPU [% of TDP]</td><td class="h">94.4 %</td><td>2.9 %</td><td>95.9 %</td><td>85.8 %</td></tr>
<tr><td class="i"><svg class="a"><use href="#k"/></svg></td><td>Выделенная память GPU</td><td class="h">8,028 МБ</td><td>721 МБ</td><td>8,029 МБ</td><td>7,307 МБ</td></tr>
<tr><td class="i"><svg class="a"><use href="#k"/></svg></td><td>Выделенная память GPU D3D</td><td class="h">7,763 МБ</td><td>455 МБ</td><td>7,764 МБ</td><td>7,042 МБ</td></tr>
<tr><td class="i"><svg class="a"><use href="#k"/></svg></td><td>Динамическая память GPU D3D</td><td>379 МБ</td><td>105 МБ</td><td>828 МБ</td><td>362 МБ</td></tr>
<tr><td class="i"><svg class="a"><use href="#k"/></svg></td><td>Скорость соединения PCIe</td><td>16.0 GT/s</td><td>2.5 GT/s</td><td>16.0 GT/s</td><td>15.0 GT/s</td></tr>
<tr><td class="i"></td><td></td><td></td><td></td><td></td><td></td></tr>
<tr class="g"><td class="i"><svg class="e"><use href="#d"/></svg><svg class="a"><use href="#c"/></svg></td><td>RTSS</td><td></td><td></td><td></td><td></td></tr>
<tr><td class="i"><svg class="a"><use href="#k"/></svg></td><td>Framerate</td><td>16 FPS</td><td>5 FPS</td><td>159 FPS</td><td>22 FPS</td></tr>
<tr><td class="i"><svg class="a"><use href="#k"/></svg></td><td>Frame Time</td><td class="h">60.3 ms</td><td>4.9 ms</td><td>79.3 ms</td><td>59.5 ms</td></tr>
<tr><td class="i"></td><td></td><td></td><td></td><td></td><td></td></tr>
<tr class="g"><td class="i"><svg class="e"><use href="#r"/></svg><svg class="a"><use href="#c"/></svg></td><td>Network: Intel Wi-Fi 6E AX210 160MHz</td><td></td><td></td><td></td><td></td></tr>
<tr><td class="i"></td><td></td><td></td><td></td><td></td><td></td></tr>
<tr class="g"><td class="i"><svg class="e"><use href="#r"/></svg><svg class="a"><use href="#c"/></svg></td><td>Network: Intel Ethernet Controller I226-V (Raptor Lake PCH)</td><td></td><td></td><td></td><td></td></tr>
</tbody></table></div>
<div style="position:absolute;left:755px;top:48px;width:3px;height:1506px;background:#8a8a8a"></div>
<div style="position:absolute;left:19px;top:1612px;width:703px;height:3px;background:#8a8a8a"></div>
<div style="position:absolute;left:0;top:1622px;width:766px;height:1px;background:#9a9a9a"></div>
</div>

<!-- red marks -->
<div class="rl" style="left:1039px;top:595px;width:71px;height:6px"></div>
<div class="rl" style="left:1039px;top:612px;width:71px;height:6px"></div>
<div class="rl" style="left:1039px;top:630px;width:71px;height:6px"></div>
<div class="rl" style="left:1039px;top:799px;width:71px;height:6px"></div>
<div class="rl" style="left:1039px;top:935px;width:71px;height:6px"></div>
<div class="rl" style="left:1030px;top:970px;width:71px;height:6px"></div>

<!-- toolbar -->
<div class="tb" style="left:429px;width:42px"><svg viewBox="0 0 42 33"><path d="M4 16l9-9v5h7v9h-7v5zM38 16l-9-9v5h-7v9h7v5z" fill="#1b8fdc"/></svg></div>
<div class="tb" style="left:474px;width:41px;background:#f2f2f2;border-color:#e2e2e2"><svg viewBox="0 0 41 33"><path d="M19 16l-9-9v5H4v9h6v5zM22 16l9-9v5h6v9h-6v5z" fill="#a6d3f2"/></svg></div>
<div class="tb" style="left:839px;width:42px"><svg viewBox="0 0 42 33"><path d="M8 3L35 6V25L8 25Z" fill="#1656c8" stroke="#9aa4b4"/><path d="M8 3L22 5V25H8Z" fill="#5aa6f0"/><circle cx="17" cy="17" r="7" fill="#cfe0f0" stroke="#7a7a7a" stroke-width="2"/><path d="M22 22l7 8" stroke="#a86a2a" stroke-width="3"/></svg></div>
<div class="tb" style="left:892px;width:40px"><svg viewBox="0 0 40 33"><rect x="6" y="3" width="14" height="12" fill="#2c8fe0" stroke="#8a9aac"/><path d="M10 16l-2 3h10l-2-3z" fill="#888"/><rect x="21" y="16" width="14" height="11" fill="#2c8fe0" stroke="#8a9aac"/><path d="M25 28l-2 3h10l-2-3z" fill="#888"/><path d="M20 9h8v7" fill="none" stroke="#777"/></svg></div>
<div style="position:absolute;left:959px;top:1638px;font-size:12px;line-height:16px;color:#222;white-space:nowrap;letter-spacing:.2px;transform:scaleX(.95);transform-origin:0 0">0:07:16</div>
<div class="tb" style="left:1003px;width:40px"><svg viewBox="0 0 40 33"><circle cx="20" cy="16.500" r="14" fill="#fff" stroke="#2a2a2a" stroke-width="1.600"/><path d="M20 5v11.500h9" fill="none" stroke="#222" stroke-width="2"/><path d="M20 3v3M20 27v3M6 16.500h3M31 16.500h3M11 7l2 2M29 7l-2 2M11 26l2-2M29 26l-2-2" stroke="#555"/></svg></div>
<div class="tb" style="left:1048px;width:41px"><svg viewBox="0 0 41 33"><path d="M9 3H25L32 10V30H9Z" fill="#f4f4f4" stroke="#a8a8a8"/><path d="M13 9h12M13 13h15M13 17h15M13 21h15M13 25h15M17 9v18M23 9v18" stroke="#b8b8b8"/><path d="M26 18h5v5h5v5h-5v5h-5v-5h-5v-5h5z" transform="translate(0 -3)" fill="#a8d860" stroke="#78a838"/></svg></div>
<div class="tb" style="left:1095px;width:41px"><svg viewBox="0 0 41 33"><circle cx="20.500" cy="16.500" r="9" fill="none" stroke="#a2a2a2" stroke-width="5"/><circle cx="20.500" cy="16.500" r="13" fill="none" stroke="#8e8e8e" stroke-width="4" stroke-dasharray="5 5.200"/></svg></div>
<div class="tb" style="left:1140px;width:42px"><svg viewBox="0 0 42 33"><path d="M13 3L21 11 29 3 36 10 28 16.500 36 24 29 30 21 22 13 30 6 24 14 16.500 6 10Z" fill="#2f93d6"/></svg></div>

<!-- sensor graph windows -->
<div class="w0" style="top:-8px;height:193px"><div class="tt" style="height:36px"><svg class="ti" style="margin-top:-5px"><use href="#hw"/></svg><span style="margin-top:-5px">Температура GPU</span><svg class="tx" style="margin-top:-3px"><use href="#xx"/></svg></div>
<svg class="p" style="top:36px;height:157px" width="717" height="157"><g transform="translate(-11 -28) scale(.5192 .3333)"><use href="#p1" fill="#a596a6"/></g><g transform="translate(0 15)"><rect y="-20" width="717" height="200" fill="url(#g)"/></g><g transform="translate(-11 -28) scale(.5192 .3333)"><use href="#p1" fill="none" stroke="#3a0a40" stroke-width="1.200" clip-path="url(#cl)"/></g><rect width="717" height="1" fill="#8c8c8c"/></svg>
<div class="bx" style="top:37px"><span>100.0</span></div><div class="sw" style="left:726px;background:#3a0a40"></div><div class="sw" style="left:746px;background:#dff5fd"></div><div class="sw" style="left:766px;background:#a9c4e8"></div><div class="bx" style="bottom:66px"><span>57.9 °C</span></div><div class="bt" style="left:721px;width:35px"><span>Auto Fit</span></div><div class="bt" style="left:758px;width:26px"><span>Reset</span></div><div class="bx" style="bottom:1px"><span>0.0</span></div></div>

<div class="w0" style="top:195px;height:203px"><div class="tt" style="height:30px"><svg class="ti"><use href="#hw"/></svg><span>Температура перехода памяти GPU</span><svg class="tx"><use href="#xx"/></svg></div>
<svg class="p" style="top:30px;height:173px" width="717" height="173"><g transform="translate(-11 -225) scale(.5192 .3333)"><use href="#p2" fill="#ff9898"/></g><g transform="translate(0 10)"><rect y="-20" width="717" height="210" fill="url(#g)"/></g><g transform="translate(-11 -225) scale(.5192 .3333)"><use href="#p2" fill="none" stroke="#f00" stroke-width="1.200" clip-path="url(#cl)"/></g><rect width="717" height="1" fill="#8c8c8c"/></svg>
<div class="bx" style="top:31px"><span>110.0</span></div><div class="sw" style="left:726px;background:#f00"></div><div class="sw" style="left:746px;background:#dff5fd"></div><div class="sw" style="left:766px;background:#a9c4e8"></div><div class="bx" style="bottom:66px"><span>56.0 °C</span></div><div class="bt" style="left:721px;width:35px"><span>Auto Fit</span></div><div class="bt" style="left:758px;width:26px"><span>Reset</span></div><div class="bx" style="bottom:1px"><span>0.0</span></div></div>

<div class="w0" style="top:407px;height:184px"><div class="tt" style="height:30px"><svg class="ti"><use href="#hw"/></svg><span>Температура горячей точки GPU</span><svg class="tx"><use href="#xx"/></svg></div>
<svg class="p" style="top:30px;height:154px" width="717" height="154"><g transform="translate(-11 -27) scale(.5192 .3333)"><use href="#p3" fill="#ff9898"/></g><g transform="translate(0 11)"><rect y="-20" width="717" height="200" fill="url(#g)"/></g><g transform="translate(-11 -27) scale(.5192 .3333)"><use href="#p3" fill="none" stroke="#f00" stroke-width="1.200" clip-path="url(#cl)"/></g><rect width="717" height="1" fill="#8c8c8c"/></svg>
<div class="bx" style="top:31px"><span>100.0</span></div><div class="sw" style="left:726px;background:#f00"></div><div class="sw" style="left:746px;background:#dff5fd"></div><div class="sw" style="left:766px;background:#a9c4e8"></div><div class="bx" style="bottom:66px"><span>67.1 °C</span></div><div class="bt" style="left:721px;width:35px"><span>Auto Fit</span></div><div class="bt" style="left:758px;width:26px"><span>Reset</span></div><div class="bx" style="bottom:1px"><span>0.0</span></div></div>

<div class="w0" style="top:600px;height:198px"><div class="tt" style="height:30px"><svg class="ti"><use href="#hw"/></svg><span>GPU Вентилятор1</span><svg class="tx"><use href="#xx"/></svg></div>
<svg class="p" style="top:30px;height:168px" width="717" height="168"><g transform="translate(-11 -220) scale(.5192 .3333)"><use href="#p4" fill="#a596a6"/></g><g transform="translate(0 6)"><rect y="-20" width="717" height="200" fill="url(#g)"/></g><g transform="translate(-11 -220) scale(.5192 .3333)"><use href="#p4" fill="none" stroke="#3a0a40" stroke-width="1.200" clip-path="url(#cl)"/></g><rect width="717" height="1" fill="#8c8c8c"/></svg>
<div class="bx" style="top:31px"><span>3000</span></div><div class="sw" style="left:726px;background:#3a0a40"></div><div class="sw" style="left:746px;background:#dff5fd"></div><div class="sw" style="left:766px;background:#a9c4e8"></div><div class="bx" style="bottom:66px"><span>1,640 RPM</span></div><div class="bt" style="left:721px;width:35px"><span>Auto Fit</span></div><div class="bt" style="left:758px;width:26px"><span>Reset</span></div><div class="bx" style="bottom:1px"><span>0</span></div></div>

<div class="w0" style="top:808px;height:207px"><div class="tt" style="height:30px"><svg class="ti"><use href="#hw"/></svg><span>GPU Core (NVVDD) Вывод Потребляемая мощность</span><svg class="tx"><use href="#xx"/></svg></div>
<svg class="p" style="top:30px;height:177px" width="717" height="177"><g transform="translate(-11 -38) scale(.5192 .3333)"><use href="#p5" fill="#ff9898"/></g><g transform="translate(0 15)"><rect y="-20" width="717" height="220" fill="url(#g)"/></g><g transform="translate(-11 -38) scale(.5192 .3333)"><use href="#p5" fill="none" stroke="#f00" stroke-width="1.100" clip-path="url(#cl)"/></g><rect width="717" height="1" fill="#8c8c8c"/></svg>
<div class="bx" style="top:31px"><span>500.000</span></div><div class="sw" style="left:726px;background:#f00"></div><div class="sw" style="left:746px;background:#dff5fd"></div><div class="sw" style="left:766px;background:#a9c4e8"></div><div class="bx" style="bottom:66px"><span>179.213 W</span></div><div class="bt" style="left:721px;width:35px"><span>Auto Fit</span></div><div class="bt" style="left:758px;width:26px"><span>Reset</span></div><div class="bx" style="bottom:1px"><span>0.000</span></div></div>

<div class="w0" style="top:1025px;height:188px"><div class="tt" style="height:30px;background:linear-gradient(#e4e4e4,#fff)"><svg class="ti"><use href="#hw"/></svg><span>GPU Потребляемая мощность</span><svg class="tx"><use href="#xx"/></svg></div>
<svg class="p" style="top:30px;height:158px" width="717" height="158"><g transform="translate(-11 -35) scale(.5192 .3333)"><use href="#p6" fill="#ff9898"/></g><g transform="translate(0 15)"><rect y="-20" width="717" height="200" fill="url(#g)"/></g><g transform="translate(-11 -35) scale(.5192 .3333)"><use href="#p6" fill="none" stroke="#f00" stroke-width="1.200" clip-path="url(#cl)"/></g><rect width="717" height="1" fill="#8c8c8c"/></svg>
<div class="bx" style="top:31px"><span>500.000</span></div><div class="sw" style="left:726px;background:#f00"></div><div class="sw" style="left:746px;background:#dff5fd"></div><div class="sw" style="left:766px;background:#a9c4e8"></div><div class="bx" style="bottom:66px"><span>268.975 W</span></div><div class="bt" style="left:721px;width:35px"><span>Auto Fit</span></div><div class="bt" style="left:758px;width:26px"><span>Reset</span></div><div class="bx" style="bottom:1px"><span>0.000</span></div></div>

<div class="w0" style="top:1222px;height:200px"><div class="tt" style="height:30px"><svg class="ti"><use href="#hw"/></svg><span>Частота GPU</span><svg class="tx"><use href="#xx"/></svg></div>
<svg class="p" style="top:30px;height:170px" width="717" height="170"><g transform="translate(-11 -232) scale(.5192 .3333)"><use href="#p7" fill="#ff9898"/></g><g transform="translate(0 9)"><rect y="-20" width="717" height="200" fill="url(#g)"/></g><g transform="translate(-11 -232) scale(.5192 .3333)"><use href="#p7" fill="none" stroke="#f00" stroke-width="1.200" clip-path="url(#cl)"/></g><rect width="717" height="1" fill="#8c8c8c"/></svg>
<div class="bx" style="top:31px"><span>3200.0</span></div><div class="sw" style="left:726px;background:#f00"></div><div class="sw" style="left:746px;background:#dff5fd"></div><div class="sw" style="left:766px;background:#a9c4e8"></div><div class="bx" style="bottom:66px"><span>3,000.0 МГц</span></div><div class="bt" style="left:721px;width:35px"><span>Auto Fit</span></div><div class="bt" style="left:758px;width:26px"><span>Reset</span></div><div class="bx" style="bottom:1px"><span>0.0</span></div></div>

<!-- MSI Afterburner -->
<svg class="abs" width="2004" height="2001" font-family="Liberation Sans, sans-serif">
<path d="M1224 1437H1982L2002.500 1458V1987H1201V1458Z" fill="#3d3d3d"/>
<path d="M1224 1437H1982L1983 1457H1222Z" fill="url(#pu)"/>
<path d="M1201 1458L1224 1437 1222 1462Z" fill="#555"/><path d="M2002.500 1458L1982 1437 1983 1462Z" fill="#555"/>
<path d="M1222 1967H1983L2002.500 1987H1201Z" fill="#2c2c2c"/>
<rect x="1222" y="1457" width="761" height="510" fill="#0d0d0d"/>
<rect x="1226" y="1462" width="753" height="501" fill="url(#pb)"/>
<path d="M1226 1462H1979V1577L1226 1777Z" fill="#363636"/>
<path d="M1226 1462H1979V1500H1226Z" fill="#3c3c3c" opacity=".5"/>
<g fill="none" stroke="#fff" opacity=".035" stroke-width="14"><path d="M1440 1550C1560 1620 1520 1800 1620 1880"/><path d="M1730 1560C1760 1640 1700 1760 1740 1880"/><path d="M1600 1680C1540 1720 1570 1790 1640 1790"/></g>
<!-- notch -->
<path d="M1505 1457H1698L1648 1510H1555Z" fill="#050505"/>
<path d="M1512 1457H1691L1644 1504H1559Z" fill="#3f3f3f"/>
<path d="M1512 1457L1559 1504H1644L1691 1457" fill="none" stroke="url(#ng)" stroke-width="1.300"/>
<text x="1561" y="1491" font-size="40" font-weight="bold" font-style="italic" fill="#8e8e8e" stroke="#8e8e8e" stroke-width="1" textLength="78" lengthAdjust="spacingAndGlyphs">msi</text>
<!-- win buttons -->
<rect x="1891.500" y="1470.500" width="77" height="25" rx="6" fill="none" stroke="#6a6a6a"/><path d="M1918.500 1471V1495M1943.500 1471V1495" stroke="#6a6a6a"/>
<path d="M1898 1476l14-2v8h-14zM1898 1483h14v8l-14-2z" fill="#2d4384"/><path d="M1905 1475v16" stroke="#1a2a55"/>
<rect x="1924" y="1487" width="15" height="3" fill="#888"/>
<text x="1949" y="1489" font-size="17" font-weight="bold" fill="#999">X</text>
<!-- gauge rows -->
<g font-size="15" fill="#767676" text-anchor="end" letter-spacing="1.500"><text x="1404" y="1556">GPU</text><text x="1404" y="1590">MEM</text><text x="1404" y="1624">VOLT</text><text x="1404" y="1658">TEMP</text></g>
<g fill="none" stroke="#6c6c6c"><rect x="1410.500" y="1537.500" width="401" height="25"/><rect x="1410.500" y="1571.500" width="401" height="25"/><rect x="1410.500" y="1605.500" width="401" height="25"/><rect x="1410.500" y="1639.500" width="401" height="25"/><path d="M1739.500 1538V1562M1739.500 1572V1596M1739.500 1606V1630M1739.500 1640V1664"/></g>
<g id="bar1"><rect x="1414" y="1549.700" width="20" height="1" fill="#3044a8"/><rect x="1438" y="1549" width="20" height="2" fill="#2f4fd0"/><rect x="1462" y="1549" width="20" height="2" fill="#2f55e0"/><rect x="1486" y="1549" width="20" height="2" fill="#2f62e8"/><rect x="1510" y="1548" width="20" height="4" fill="#2e6ae8"/><rect x="1534" y="1548" width="20" height="4" fill="#2a86e0"/><rect x="1558" y="1548" width="20" height="4" fill="#1f9fd0"/><rect x="1582" y="1547.500" width="20" height="5" fill="#16b0b4"/><rect x="1606" y="1547" width="20" height="6" fill="#10c49c"/><rect x="1630" y="1547" width="20" height="6" fill="#9a60e0"/><rect x="1654" y="1547" width="20" height="6" fill="#a456e6"/><rect x="1678" y="1546" width="20" height="8" fill="#8c58ea"/><rect x="1702" y="1546" width="20" height="8" fill="#c92ee6"/><rect x="1726" y="1546" width="10" height="8" fill="#ff00e0"/></g>
<use href="#bar1" y="34"/>
<g><rect x="1414" y="1617.700" width="20" height="1" fill="#3044a8"/><rect x="1438" y="1617" width="20" height="2" fill="#2f4fd0"/><rect x="1462" y="1617" width="20" height="2" fill="#2f55e0"/><rect x="1486" y="1617" width="20" height="2" fill="#2f62e8"/><rect x="1510" y="1616" width="20" height="4" fill="#2e6ae8"/><rect x="1534" y="1616" width="20" height="4" fill="#2a86e0"/><rect x="1558" y="1616" width="20" height="4" fill="#1f9fd0"/><rect x="1582" y="1615.500" width="9" height="5" fill="#16b0b4"/></g>
<g><rect x="1414" y="1651.700" width="20" height="1" fill="#3044a8"/><rect x="1438" y="1651" width="20" height="2" fill="#2f4fd0"/><rect x="1462" y="1651" width="20" height="2" fill="#2f55e0"/><rect x="1486" y="1651" width="20" height="2" fill="#2f62e8"/><rect x="1510" y="1650" width="20" height="4" fill="#2e6ae8"/><rect x="1534" y="1650" width="20" height="4" fill="#2a86e0"/><rect x="1558" y="1650" width="20" height="4" fill="#1f9fd0"/><rect x="1582" y="1649.500" width="19" height="5" fill="#16b0b4"/></g>
<g font-size="25" font-weight="bold" fill="#f2f2f2" text-anchor="end"><text x="1809" y="1559" letter-spacing="-.6">3000</text><text x="1809" y="1593" letter-spacing="-3.400">11616</text><text x="1809" y="1627" letter-spacing="-3">1100</text><text x="1809" y="1661" letter-spacing="-.6">58</text></g>
<g font-size="14" fill="#808080" letter-spacing="1.500"><text x="1815" y="1556">MHz</text><text x="1815" y="1590">MHz</text><text x="1815" y="1626" font-size="11">M</text><text x="1828" y="1626" font-size="16">V</text><text x="1813" y="1659" font-size="17">°C</text></g>
<!-- side panels -->
<path d="M1222 1556H1260Q1272 1556 1272 1568V1854Q1272 1866 1260 1866H1222Z" fill="#0d0d0d"/>
<path d="M1222 1559H1260Q1269 1559 1269 1568V1854Q1269 1863 1260 1863H1222Z" fill="#3a3a3a"/>
<path d="M1983 1556H1946Q1933 1556 1933 1568V1854Q1933 1866 1946 1866H1983Z" fill="#0d0d0d"/>
<path d="M1983 1559H1946Q1936 1559 1936 1568V1854Q1936 1863 1946 1863H1983Z" fill="#3a3a3a"/>
<path d="M1226 1609.500H1265M1226 1660.500H1265M1226 1711.500H1265M1226 1762.500H1265M1226 1813.500H1265M1940 1609.500H1980M1940 1660.500H1980M1940 1711.500H1980M1940 1762.500H1980M1940 1813.500H1980" stroke="#555"/>
<path d="M1233 1573L1243 1580 1247 1576 1249 1583 1255 1580 1253 1587 1259 1595 1253 1595 1248 1589 1246 1595H1235L1238 1586Z" fill="#6e6e6e"/>
<g fill="none" stroke="#747474" stroke-width="2"><circle cx="1246" cy="1635" r="11"/><circle cx="1246" cy="1685" r="11"/></g>
<text x="1246" y="1641" font-size="17" font-weight="bold" fill="#747474" text-anchor="middle">K</text>
<text x="1246" y="1691" font-size="17" font-weight="bold" fill="#747474" text-anchor="middle">i</text>
<circle cx="1240" cy="1735" r="6.500" fill="none" stroke="#747474" stroke-width="2"/><path d="M1244 1741l5 8" stroke="#747474" stroke-width="2.500"/>
<path d="M1259 1728a8 9 0 1 0 0 15" fill="none" stroke="#747474" stroke-width="2"/>
<circle cx="1246" cy="1789" r="8" fill="none" stroke="#747474" stroke-width="4"/><circle cx="1246" cy="1789" r="11.500" fill="none" stroke="#747474" stroke-width="3.500" stroke-dasharray="5 4"/>
<rect x="1231" y="1826" width="30" height="21" rx="2" fill="#777"/><rect x="1234" y="1829" width="24" height="15" fill="#262626"/><path d="M1236 1837h6l2-5 3 9 2-4h7" fill="none" stroke="#999" stroke-width="1.300"/><path d="M1243 1847h6v3h4v2h-14v-2h4z" fill="#777"/>
<rect x="1950" y="1584" width="16" height="13" rx="2" fill="#777"/><path d="M1953 1584v-5a5 5 0 0 1 10 0v5" fill="none" stroke="#777" stroke-width="2.500"/>
<g font-size="24" font-weight="bold" fill="#4e4e4e" text-anchor="middle"><text x="1958" y="1644">1</text><text x="1958" y="1695">2</text><text x="1958" y="1746">3</text><text x="1958" y="1797">4</text><text x="1958" y="1848">5</text></g>
<!-- panel box -->
<path d="M1512 1947H1298Q1290 1947 1290 1939V1703Q1290 1695 1298 1695H1907Q1915 1695 1915 1703V1939Q1915 1947 1907 1947H1691" fill="none" stroke="#6a6a6a"/>
<path d="M1290 1738.500H1915M1498.500 1695V1947M1705.500 1695V1947M1498 1855.500H1915M1498 1881.500H1705M1498 1907.500H1549M1654 1907.500H1915M1549 1907L1512 1947M1654 1907L1691 1947" fill="none" stroke="#6a6a6a"/>
<path d="M1558 1920H1645L1691 1967H1512Z" fill="#3a3a3a"/><path d="M1512 1967L1558.500 1920H1644.500L1691 1967" fill="none" stroke="url(#ng)" stroke-width="1.300"/>
<path d="M1552 1940A9.500 11 0 1 0 1566 1940" fill="none" stroke="#5c5c5c" stroke-width="3"/><path d="M1561 1932l-8 7 9 3z" fill="#5c5c5c"/>
<rect x="1591" y="1934" width="23" height="23" rx="2" fill="none" stroke="#4e4e4e" stroke-width="3"/><rect x="1596" y="1934" width="13" height="8" fill="#4e4e4e"/>
<circle cx="1644" cy="1947" r="10" fill="none" stroke="#4e4e4e" stroke-width="2.500"/><path d="M1639 1947l4 5 8-11" fill="none" stroke="#4e4e4e" stroke-width="2.500"/>
<!-- headers -->
<path d="M1355 1701L1338 1716 1345 1717 1337 1722 1344 1723 1333 1733 1351 1718 1345 1717 1352 1711 1347 1710Z" fill="#8a8a8a"/>
<g font-size="17" fill="#8c8c8c" letter-spacing="1"><text x="1361" y="1723" textLength="95">VOLTAGE</text><text x="1599" y="1723" textLength="71">CLOCK</text><text x="1808" y="1723" textLength="42">FAN</text></g>
<path d="M1538 1729A25 24 0 0 1 1587 1729" fill="none" stroke="#8a8a8a" stroke-width="7" stroke-dasharray="14 2"/><path d="M1572 1712l-7 9h3l-4 8 9-11h-3z" fill="#8a8a8a"/>
<g fill="#8a8a8a"><ellipse cx="1785" cy="1709" rx="7" ry="8"/><ellipse cx="1794" cy="1719" rx="7" ry="6" transform="rotate(-20 1794 1719)"/><ellipse cx="1786" cy="1726" rx="6" ry="7"/><ellipse cx="1776" cy="1716" rx="6" ry="6"/></g>
<!-- labels -->
<g font-size="12" fill="#7c7c7c"><text x="1311" y="1766" textLength="159">CORE VOLTAGE  (%)</text><text x="1523" y="1766" textLength="158">CORE CLOCK (MHz)</text><text x="1740" y="1766" textLength="140">POWER LIMIT (%)</text><text x="1508" y="1808" textLength="187">MEMORY CLOCK (MHz)</text><text x="1744" y="1808" textLength="131">TEMP LIMIT (°C)</text><text x="1748" y="1873" textLength="123">FAN SPEED (%)</text></g>
<!-- sliders -->
<g fill="#000"><rect x="1306" y="1781" width="130" height="4"/><rect x="1514" y="1781" width="130" height="4"/><rect x="1514" y="1821" width="130" height="4"/><rect x="1723" y="1781" width="130" height="4" fill="#0a0a0a"/><rect x="1725" y="1820" width="130" height="4" fill="#0a0a0a"/><rect x="1723" y="1888" width="130" height="4" fill="#111"/></g>
<g fill="#0a4a50"><rect x="1514" y="1780" width="58" height="6"/><rect x="1514" y="1820" width="84" height="6"/><rect x="1723" y="1780" width="130" height="6"/><rect x="1725" y="1819" width="130" height="6"/><rect x="1723" y="1887" width="70" height="6" opacity=".55"/></g>
<g fill="#16c4cc"><rect x="1530" y="1782.500" width="42" height="1"/><rect x="1540" y="1822.500" width="58" height="1"/><rect x="1750" y="1782" width="103" height="2" fill="#28e0e8"/><rect x="1750" y="1821" width="105" height="2" fill="#28e0e8"/></g>
<g fill="#00e8f4"><circle cx="1306" cy="1783" r="6"/><circle cx="1572" cy="1783" r="6"/><circle cx="1597" cy="1823" r="6"/><circle cx="1852" cy="1783" r="6"/><circle cx="1854" cy="1822" r="6"/></g>
<circle cx="1792" cy="1890" r="6" fill="#0e7c82"/>
<g fill="#141414" stroke="#8a8a8a"><rect x="1442.500" y="1774.500" width="40" height="17"/><rect x="1650.500" y="1774.500" width="40" height="17"/><rect x="1650.500" y="1815.500" width="40" height="17"/><rect x="1859.500" y="1774.500" width="40" height="17"/><rect x="1859.500" y="1815.500" width="40" height="17"/><rect x="1859.500" y="1881.500" width="40" height="17"/></g>
<g font-size="13" font-weight="bold" fill="#f0f0f0" text-anchor="end"><text x="1479" y="1788">+0</text><text x="1687" y="1788" textLength="33" lengthAdjust="spacingAndGlyphs">+179</text><text x="1687" y="1829" textLength="33" lengthAdjust="spacingAndGlyphs">+1114</text><text x="1896" y="1788" textLength="19" lengthAdjust="spacingAndGlyphs">128</text><text x="1896" y="1829" textLength="13" lengthAdjust="spacingAndGlyphs">88</text><text x="1896" y="1895" textLength="13" lengthAdjust="spacingAndGlyphs">68</text></g>
<!-- link -->
<rect x="1708.500" y="1831.500" width="80" height="21" fill="none" stroke="#777"/><rect x="1730" y="1832" width="35" height="21" fill="#747474"/><path d="M1767.500 1832V1853M1730 1832V1853" stroke="#777"/>
<text x="1737" y="1847" font-size="12" font-weight="bold" fill="#222" letter-spacing="1">ON</text>
<path d="M1724 1837l-7 8" stroke="#aaa" stroke-width="2.500" fill="none"/><rect x="1720" y="1834" width="6" height="8" rx="3" fill="none" stroke="#aaa" stroke-width="1.800" transform="rotate(40 1723 1838)"/><rect x="1713" y="1842" width="6" height="8" rx="3" fill="none" stroke="#aaa" stroke-width="1.800" transform="rotate(40 1716 1846)"/>
<path d="M1783 1834l-7 9h3l-3 9 8-11h-3z" fill="#7a7a7a"/>
<!-- gpu name -->
<text x="1505" y="1874" font-family="Liberation Mono, monospace" font-size="13" font-weight="bold" fill="#e8e8e8" textLength="160" lengthAdjust="spacingAndGlyphs">NVIDIA GeForce RTX 4070 Ti</text>
<text x="1504" y="1900" font-family="Liberation Mono, monospace" font-size="13" font-weight="bold" fill="#e8e8e8" textLength="36" lengthAdjust="spacingAndGlyphs">531.41</text>
<!-- curve editor -->
<rect x="1315" y="1919.500" width="155" height="24" fill="none" stroke="#8a8a8a"/><path d="M1339.500 1920V1943" stroke="#8a8a8a"/>
<path d="M1318 1933h3v9h-3zM1323 1928h3v14h-3zM1328 1925h3v17h-3zM1333 1923h3v19h-3z" fill="#8e8e8e" transform="translate(1 0)"/>
<text x="1344" y="1936" font-size="13" fill="#8a8a8a" textLength="123">CURVE EDITOR</text>
<!-- fan buttons -->
<rect x="1708" y="1910" width="34" height="34" fill="#6e6e6e"/><text x="1725" y="1937" font-size="25" fill="#1c1c1c" text-anchor="middle">A</text>
<rect x="1744.500" y="1910.500" width="35" height="33" fill="none" stroke="#7c7c7c"/><circle cx="1762" cy="1920" r="6" fill="#999"/><path d="M1750 1941c0-16 24-16 24 0z" fill="#999"/>
<path d="M1852 1910H1912V1938Q1912 1944 1906 1944H1852Z" fill="#6f6f6f"/><text x="1882" y="1925" font-size="13" font-weight="bold" fill="#1c1c1c" text-anchor="middle" letter-spacing="1">FAN</text><text x="1882" y="1938" font-size="13" font-weight="bold" fill="#1c1c1c" text-anchor="middle" letter-spacing="1">SYNC</text>
<!-- red marks -->
<g fill="#f60a0a"><rect x="1635" y="1793" width="71" height="6"/><rect x="1635" y="1837" width="71" height="6"/><rect x="1836" y="1799" width="72" height="6"/></g>
</svg>
</body></html>
